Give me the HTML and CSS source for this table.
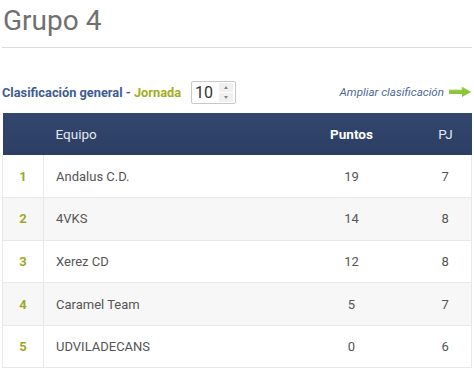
FILE: index.html
```html
<!DOCTYPE html>
<html lang="es">
<head>
<meta charset="utf-8">
<link rel="stylesheet" href="styles.css">
</head>
<body>
<div class="page">
  <h1 class="title">Grupo 4</h1>
  <div class="toolbar">
    <div class="left">
      <span class="lbl">Clasificación general - </span><span class="jornada">Jornada</span>
      <div class="spin">
        <span class="val">10</span>
        <span class="btns"><span class="btn"><span class="up"></span></span><span class="btn"><span class="down"></span></span></span>
      </div>
    </div>
    <a class="more">Ampliar clasificación
      <svg width="22" height="10" viewBox="0 0 22 10"><path d="M0 3h13V0l9 5-9 5V7H0z" fill="#8cc43c"/><path d="M0 3h13V0l9 5" fill="none" stroke="#a8d860" stroke-width="0.8"/></svg>
    </a>
  </div>
  <table class="standings">
    <thead>
      <tr><th class="c-pos"></th><th class="c-team">Equipo</th><th class="c-pts">Puntos</th><th class="c-pj">PJ</th></tr>
    </thead>
    <tbody>
      <tr><td class="c-pos">1</td><td class="c-team">Andalus C.D.</td><td class="c-pts">19</td><td class="c-pj">7</td></tr>
      <tr class="alt"><td class="c-pos">2</td><td class="c-team">4VKS</td><td class="c-pts">14</td><td class="c-pj">8</td></tr>
      <tr><td class="c-pos">3</td><td class="c-team">Xerez CD</td><td class="c-pts">12</td><td class="c-pj">8</td></tr>
      <tr class="alt"><td class="c-pos">4</td><td class="c-team">Caramel Team</td><td class="c-pts">5</td><td class="c-pj">7</td></tr>
      <tr><td class="c-pos">5</td><td class="c-team">UDVILADECANS</td><td class="c-pts">0</td><td class="c-pj">6</td></tr>
    </tbody>
  </table>
</div>
</body>
</html>
```

FILE: styles.css
```css
* { box-sizing: border-box; }
body { margin: 0; background: #fff; font-family: Roboto, "Liberation Sans", sans-serif; }
.page { padding: 0 2px; }
.title {
  margin: 0;
  padding: 3px 0 0 1px;
  height: 48px;
  font-size: 28px;
  font-weight: 400;
  color: #707070;
  line-height: 36px;
  border-bottom: 1px solid #dcdcdc;
}
.toolbar {
  display: flex;
  justify-content: space-between;
  align-items: center;
  margin-top: 32px;
  height: 24px;
  margin-bottom: 9px;
}
.left { display: flex; align-items: center; font-size: 12.8px; font-weight: 700; }
.lbl { color: #3d5d8f; white-space: pre; }
.jornada { color: #a3ae22; margin-right: 10px; }
.spin {
  width: 45px; height: 23px;
  border: 1px solid #c8c8c8;
  border-radius: 2px;
  display: flex; align-items: center; justify-content: space-between;
  padding: 0 2px 0 3px;
  background: #fff;
}
.val { font-size: 16px; font-weight: 400; color: #333; }
.btns { display: flex; flex-direction: column; gap: 1px; width: 14px; height: 19px; }
.btn { flex: 1; background: #f0f0f0; display: flex; align-items: center; justify-content: center; }
.up, .down { width: 0; height: 0; border-left: 2.5px solid transparent; border-right: 2.5px solid transparent; }
.up { border-bottom: 3px solid #888; }
.down { border-top: 3px solid #888; }
.more {
  display: flex; align-items: center; gap: 5px;
  font-size: 11.6px; font-style: italic; color: #4d6a98;
  margin-right: 1px;
}
.standings {
  width: 470px;
  border-collapse: collapse;
  font-size: 13px;
  color: #555;
}
.standings thead tr {
  background: #2f4269;
  background-image: linear-gradient(#33466e, #2c3e63);
}
.standings th {
  height: 42px;
  font-weight: 400;
  color: #e6e9f0;
  font-size: 13.5px;
  padding: 0;
}
.standings th.c-pts { font-weight: 700; color: #fff; }
.standings td {
  height: 42.6px;
  padding: 0;
  border-bottom: 1px solid #e9e9e9;
}
.standings tbody tr { border-left: 1px solid #e9e9e9; border-right: 1px solid #e9e9e9; }
.standings tr.alt td { background: #f7f7f7; }
.c-pos { width: 41px; text-align: center; }
td.c-pos { font-weight: 700; color: #9ea826; border-right: 1px solid #e9e9e9; }
.c-team { text-align: left; padding-left: 12px !important; }
.c-pts { width: 136px; text-align: center; }
.c-pj { width: 52px; text-align: center; }
```
